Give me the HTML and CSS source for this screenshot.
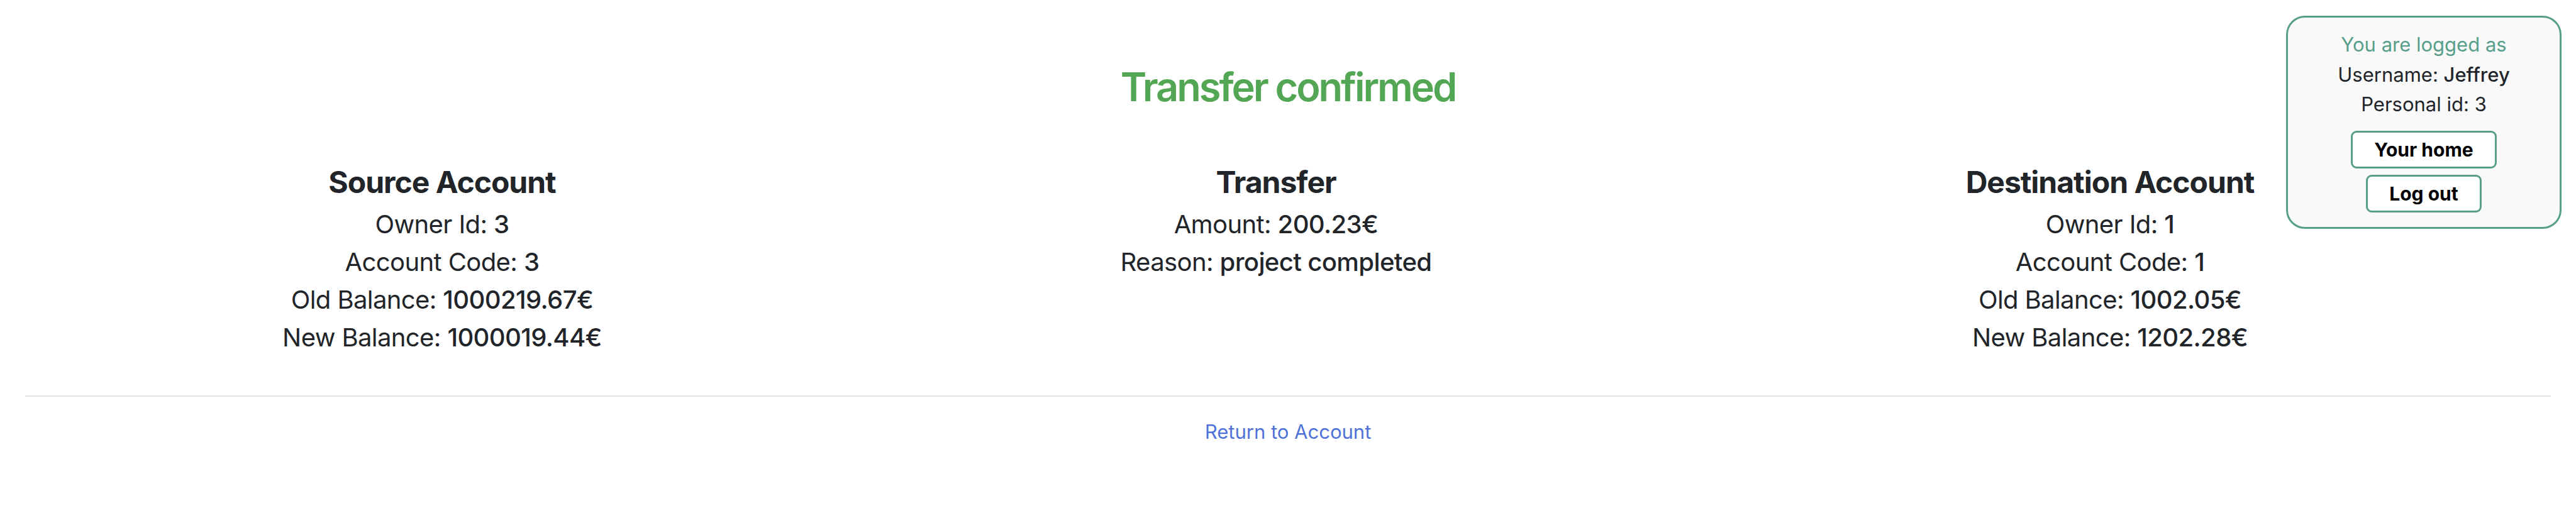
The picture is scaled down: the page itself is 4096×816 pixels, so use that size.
FILE: index.html
```html
<!DOCTYPE html>
<html lang="en">
<head>
<meta charset="utf-8">
<title>Transfer confirmed</title>
<link rel="stylesheet" href="styles.css">
</head>
<body>
<main class="page">
  <h1 class="title">Transfer confirmed</h1>
  <section class="summary">
    <div class="col">
      <h2 class="col-title">Source Account</h2>
      <p class="line">Owner Id: <span class="val">3</span></p>
      <p class="line">Account Code: <span class="val">3</span></p>
      <p class="line">Old Balance: <span class="val">1000219.67€</span></p>
      <p class="line">New Balance: <span class="val">1000019.44€</span></p>
    </div>
    <div class="col">
      <h2 class="col-title">Transfer</h2>
      <p class="line">Amount: <span class="val">200.23€</span></p>
      <p class="line">Reason: <span class="val">project completed</span></p>
    </div>
    <div class="col">
      <h2 class="col-title">Destination Account</h2>
      <p class="line">Owner Id: <span class="val">1</span></p>
      <p class="line">Account Code: <span class="val">1</span></p>
      <p class="line">Old Balance: <span class="val">1002.05€</span></p>
      <p class="line">New Balance: <span class="val">1202.28€</span></p>
    </div>
  </section>
  <hr class="divider">
  <div class="back"><a class="back-link" href="#">Return to Account</a></div>
</main>
<aside class="userbox">
  <p class="ub-line ub-head">You are logged as</p>
  <p class="ub-line">Username: <span class="ub-val">Jeffrey</span></p>
  <p class="ub-line">Personal id: 3</p>
  <div class="ub-actions">
    <a class="ub-btn" href="#">Your home</a>
    <a class="ub-btn" href="#">Log out</a>
  </div>
</aside>
</body>
</html>
```
FILE: styles.css
```css
html, body {
  margin: 0;
  padding: 0;
  background: #ffffff;
}
body {
  font-family: Inter, "Liberation Sans", sans-serif;
  color: #212529;
  position: relative;
  min-height: 816px;
}
.page {
  padding: 100px 40px 0 40px;
}
.title {
  margin: 0;
  font-size: 63px;
  line-height: 77px;
  font-weight: 600;
  letter-spacing: -3px;
  color: #53a653;
  text-align: center;
}
.summary {
  display: grid;
  grid-template-columns: 1fr 1fr 1fr;
  margin: 84px 38px 0 0;
}
.col {
  text-align: center;
}
.col-title {
  margin: 0 0 8px 0;
  font-size: 48px;
  line-height: 1.2;
  font-weight: 700;
  letter-spacing: -1px;
}
.line {
  margin: 0;
  font-size: 40px;
  line-height: 60px;
  font-weight: 400;
  letter-spacing: -0.6px;
}
.val {
  font-weight: 500;
}
.divider {
  margin: 62px 0 0 0;
  border: 0;
  height: 2px;
  background: #e3e3e3;
}
.back {
  margin-top: 32px;
  text-align: center;
  font-size: 31px;
  line-height: 48px;
}
.back-link {
  color: #4f72d8;
  text-decoration: none;
}
.userbox {
  position: absolute;
  top: 25px;
  right: 23px;
  width: 438px;
  box-sizing: border-box;
  padding: 19px 10px 23px;
  border: 3px solid #589f8b;
  border-radius: 30px;
  background: #f9f9f9;
  text-align: center;
}
.ub-line {
  margin: 0;
  font-size: 31px;
  line-height: 47.5px;
}
.ub-head {
  color: #589f8b;
}
.ub-val {
  font-weight: 500;
}
.ub-actions {
  margin-top: 18px;
  display: flex;
  flex-direction: column;
  align-items: center;
  gap: 10px;
}
.ub-btn {
  display: block;
  padding: 9px 34px;
  border: 3px solid #589f8b;
  border-radius: 9px;
  background: #ffffff;
  color: #000000;
  font-size: 30px;
  line-height: 36px;
  font-weight: 700;
  text-decoration: none;
}
```
